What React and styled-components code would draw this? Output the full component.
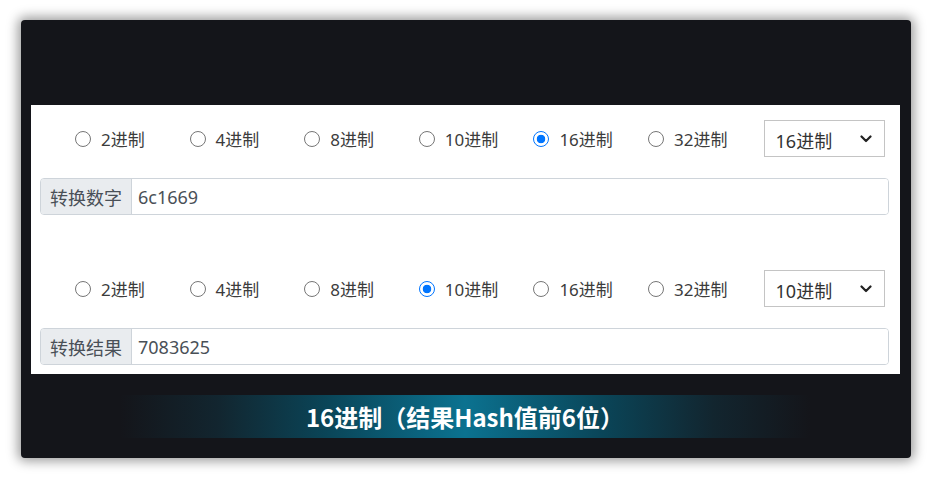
import React, { useState } from "react";
import styled, { createGlobalStyle } from "styled-components";

const Global = createGlobalStyle`
  html, body { margin: 0; padding: 0; background: #ffffff; }
  body { font-family: "Noto Sans", "Noto Sans CJK SC", sans-serif; }
  * { box-sizing: border-box; }
`;

const Page = styled.div`
  width: 933px;
  height: 479px;
  padding: 20px 22px 21px 21px;
`;

const Frame = styled.div`
  width: 890px;
  height: 438px;
  background: #14151a;
  border-radius: 4px;
  box-shadow: 0 0 12px 3px rgba(0, 0, 0, 0.4);
  padding: 85px 11px 0 10px;
  display: flex;
  flex-direction: column;
`;

const Panel = styled.div`
  background: #ffffff;
  height: 269px;
  padding: 15px 11px 9px 9px;
  display: flex;
  flex-direction: column;
`;

const Section = styled.div`
  display: flex;
  flex-direction: column;
  gap: 21px;
  margin-top: ${(p) => p.$top || 0}px;
`;

const RadioRow = styled.div`
  display: flex;
  align-items: center;
  height: 37px;
`;

const RadioList = styled.div`
  display: flex;
  align-items: center;
  padding-left: 35px;
  flex: 0 0 auto;
`;

const RadioItem = styled.label`
  width: 114.6px;
  display: flex;
  align-items: center;
  gap: 10px;
  font-size: 17px;
  color: #3c3c3c;
  font-family: "Noto Sans", "Noto Sans CJK SC", sans-serif;
  cursor: pointer;
  white-space: nowrap;
`;

const RadioInput = styled.input`
  appearance: none;
  -webkit-appearance: none;
  width: 16px;
  height: 16px;
  margin: 0;
  flex: 0 0 auto;
  border-radius: 50%;
  border: 1.5px solid #767676;
  background: #ffffff;
  &:checked {
    border: 1.8px solid #0075ff;
    background: radial-gradient(circle, #0075ff 0 4px, #ffffff 4.6px);
  }
`;

const SelectWrap = styled.div`
  position: relative;
  width: 121px;
  height: 37px;
  margin-left: 1px;
`;

const Select = styled.select`
  appearance: none;
  -webkit-appearance: none;
  width: 100%;
  height: 100%;
  border: 1px solid #c4c4c4;
  border-radius: 0;
  background: #ffffff;
  padding: 4px 0 0 11px;
  font-size: 18px;
  color: #333333;
  font-family: "Noto Sans", "Noto Sans CJK SC", sans-serif;
  outline: none;
`;

const Chevron = styled.svg`
  position: absolute;
  right: 13px;
  top: 15px;
  width: 12px;
  height: 8px;
  pointer-events: none;
`;

const InputGroup = styled.div`
  display: flex;
  height: 37px;
  border: 1px solid #ced4da;
  border-radius: 4px;
  overflow: hidden;
  width: 849px;
`;

const GroupLabel = styled.span`
  display: flex;
  align-items: center;
  padding: 0 9px 0 9px;
  background: #e9ecef;
  border-right: 1px solid #ced4da;
  font-size: 18px;
  color: #495057;
  font-family: "Noto Sans CJK SC", sans-serif;
  white-space: nowrap;
`;

const GroupInput = styled.input`
  flex: 1;
  border: none;
  outline: none;
  padding: 0 6px;
  font-size: 18px;
  color: #495057;
  font-family: "Noto Sans", "Noto Sans CJK SC", sans-serif;
  background: #fff;
`;

const Caption = styled.div`
  margin: 21px 0 0 89px;
  width: 690px;
  height: 43px;
  display: flex;
  align-items: center;
  justify-content: center;
  background: linear-gradient(
    90deg,
    rgba(20, 21, 26, 0) 0%,
    rgba(18, 38, 48, 0.95) 14%,
    #0a4558 30%,
    #0b7290 50%,
    #0a4558 70%,
    rgba(18, 38, 48, 0.95) 86%,
    rgba(20, 21, 26, 0) 100%
  );
  color: #ffffff;
  font-size: 24px;
  font-weight: 700;
  font-family: "Noto Sans CJK SC", sans-serif;
`;

const BASES = ["2进制", "4进制", "8进制", "10进制", "16进制", "32进制"];

function BaseRow({ name, value, onChange }) {
  return (
    <RadioRow>
      <RadioList>
        {BASES.map((b) => (
          <RadioItem key={b}>
            <RadioInput
              type="radio"
              name={name}
              checked={value === b}
              onChange={() => onChange(b)}
            />
            {b}
          </RadioItem>
        ))}
      </RadioList>
      <SelectWrap>
        <Select value={value} onChange={(e) => onChange(e.target.value)}>
          {BASES.map((b) => (
            <option key={b} value={b}>
              {b}
            </option>
          ))}
        </Select>
        <Chevron viewBox="0 0 12 8">
          <path d="M1.5 1.5 L6 6 L10.5 1.5" fill="none" stroke="#222" strokeWidth="2.2" strokeLinecap="round" strokeLinejoin="round" />
        </Chevron>
      </SelectWrap>
    </RadioRow>
  );
}

export default function App() {
  const [from, setFrom] = useState("16进制");
  const [to, setTo] = useState("10进制");
  return (
    <Page>
      <Global />
      <Frame>
        <Panel>
          <Section>
            <BaseRow name="from" value={from} onChange={setFrom} />
            <InputGroup>
              <GroupLabel>转换数字</GroupLabel>
              <GroupInput defaultValue="6c1669" />
            </InputGroup>
          </Section>
          <Section $top={55}>
            <BaseRow name="to" value={to} onChange={setTo} />
            <InputGroup>
              <GroupLabel>转换结果</GroupLabel>
              <GroupInput defaultValue="7083625" readOnly />
            </InputGroup>
          </Section>
        </Panel>
        <Caption>16进制（结果Hash值前6位）</Caption>
      </Frame>
    </Page>
  );
}
